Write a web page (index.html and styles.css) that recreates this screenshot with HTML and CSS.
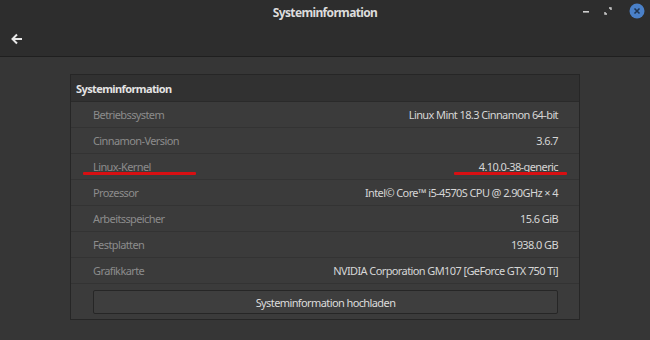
FILE: index.html
```html
<!DOCTYPE html>
<html>
<head>
<meta charset="utf-8">
<link rel="stylesheet" href="styles.css">
</head>
<body>
<div class="window">
  <header class="headerbar">
    <div class="titlerow">
      <div class="title">Systeminformation</div>
      <div class="winbtns">
        <svg class="wb" width="10" height="10" viewBox="0 0 10 10"><rect x="2" y="5" width="6" height="1.6" fill="#cfcfcf"/></svg>
        <svg class="wb" width="10" height="10" viewBox="0 0 10 10"><path d="M6 2h2v2M4 8H2V6" stroke="#cfcfcf" stroke-width="1.4" fill="none"/></svg>
        <svg class="wbclose" width="16" height="16" viewBox="0 0 16 16"><circle cx="8" cy="8" r="7.5" fill="#4a80c8"/><path d="M5.5 5.5l5 5M10.5 5.5l-5 5" stroke="#1f3552" stroke-width="1.6"/></svg>
      </div>
    </div>
    <div class="backrow">
      <svg width="14" height="14" viewBox="0 0 14 14"><path d="M12 7H3M7 2.5L2.5 7 7 11.5" stroke="#e8e8e8" stroke-width="2" fill="none"/></svg>
    </div>
  </header>
  <main class="content">
    <section class="panel">
      <div class="phead">Systeminformation</div>
      <div class="row"><span class="lbl">Betriebssystem</span><span class="val">Linux Mint 18.3 Cinnamon 64-bit</span></div>
      <div class="row"><span class="lbl">Cinnamon-Version</span><span class="val">3.6.7</span></div>
      <div class="row mark"><span class="lbl">Linux-Kernel</span><span class="val">4.10.0-38-generic</span><i class="ul ul-l"></i><i class="ul ul-r"></i></div>
      <div class="row"><span class="lbl">Prozessor</span><span class="val">Intel© Core™ i5-4570S CPU @ 2.90GHz × 4</span></div>
      <div class="row"><span class="lbl">Arbeitsspeicher</span><span class="val">15.6 GiB</span></div>
      <div class="row"><span class="lbl">Festplatten</span><span class="val">1938.0 GB</span></div>
      <div class="row"><span class="lbl">Grafikkarte</span><span class="val">NVIDIA Corporation GM107 [GeForce GTX 750 Ti]</span></div>
      <div class="btnrow"><div class="btn">Systeminformation hochladen</div></div>
    </section>
  </main>
</div>
</body>
</html>
```
FILE: styles.css
```css
* { box-sizing: border-box; }
html, body { margin: 0; padding: 0; }
body {
  width: 650px; height: 340px; overflow: hidden;
  background: #363636;
  font-family: "Noto Sans", "Open Sans", sans-serif;
  font-size: 11px;
  letter-spacing: -0.6px;
}
.window { display: flex; flex-direction: column; height: 340px; }
.headerbar {
  background: #2d2d2d;
  border-bottom: 1px solid #1f1f1f;
  height: 57px;
  display: flex; flex-direction: column;
}
.titlerow { position: relative; height: 24px; display: flex; align-items: center; justify-content: center; }
.title { color: #dcdcdc; font-weight: bold; font-size: 12px; letter-spacing: -0.65px; }
.winbtns { position: absolute; right: 5px; top: 3px; display: flex; align-items: center; gap: 12px; }
.wb { display: block; }
.wbclose { display: block; margin-left: 4px; }
.backrow { height: 32px; display: flex; align-items: center; padding-left: 10px; padding-bottom: 2px; }
.content { flex: 1; padding: 17px 0 0 70px; }
.panel {
  width: 510px;
  border: 1px solid #262626;
  background: #3b3b3b;
  display: flex; flex-direction: column;
}
.phead {
  height: 27px; background: #313131;
  border-bottom: 1px solid #2a2a2a;
  color: #e4e4e4; font-weight: bold;
  display: flex; align-items: center; padding-left: 5px;
}
.row {
  position: relative;
  height: 26px;
  border-bottom: 1px solid #333333;
  display: flex; align-items: center; justify-content: space-between;
  padding: 0 21px 0 22px;
}
.lbl { color: #8c8c8c; }
.val { color: #d6d6d6; }
.ul { position: absolute; height: 3px; background: #d80f12; top: 18px; border-radius: 1px; }
.ul-l { left: 12px; width: 113px; }
.ul-r { left: 383px; width: 113px; }
.btnrow { padding: 6px 21px 5px 22px; }
.btn {
  height: 24px;
  border: 1px solid #262626;
  background: #3e3e3e;
  border-radius: 2px;
  color: #dcdcdc;
  display: flex; align-items: center; justify-content: center;
}
```
